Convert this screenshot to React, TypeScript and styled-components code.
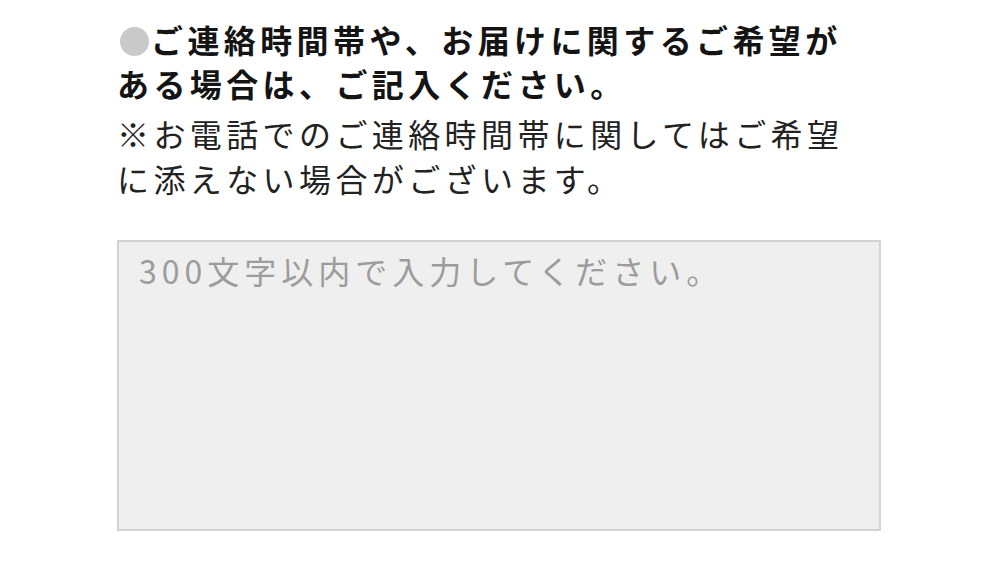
import React from 'react';
import styled, { createGlobalStyle } from 'styled-components';

const GlobalStyle = createGlobalStyle`
  html, body {
    margin: 0;
    padding: 0;
    background: #ffffff;
  }
  body {
    font-family: 'Noto Sans CJK JP', 'Noto Sans', sans-serif;
    color: #1a1a1a;
  }
`;

const FormWrap = styled.div`
  width: 764px;
  padding: 17px 0 0 117px;
  display: flex;
  flex-direction: column;
`;

const Heading = styled.div`
  font-size: 32px;
  font-weight: 700;
  line-height: 44px;
  letter-spacing: 4.4px;
  color: #141414;
`;

const Dot = styled.span`
  display: inline-block;
  width: 29px;
  height: 29px;
  border-radius: 50%;
  background: #c9c9c9;
  margin: 0 2px 0 3px;
  vertical-align: -3px;
`;

const Note = styled.div`
  margin-top: 6px;
  font-size: 32px;
  font-weight: 400;
  line-height: 45px;
  letter-spacing: 4.4px;
  color: #222222;
`;

const Request = styled.textarea`
  margin-top: 39px;
  width: 764px;
  height: 291px;
  box-sizing: border-box;
  border: 2px solid #d3d3d3;
  border-radius: 0;
  background: #efefef;
  padding: 6px 20px;
  font-family: 'Noto Sans CJK JP', 'Noto Sans', sans-serif;
  font-size: 32px;
  line-height: 44px;
  letter-spacing: 5px;
  color: #333333;
  resize: none;
  outline: none;

  &::placeholder {
    color: #9c9c9c;
  }
`;

const App = () => {
  return (
    <>
      <GlobalStyle />
      <FormWrap>
        <Heading>
          <Dot />
          ご連絡時間帯や、お届けに関するご希望が
          <br />
          ある場合は、ご記入ください。
        </Heading>
        <Note>
          ※お電話でのご連絡時間帯に関してはご希望
          <br />
          に添えない場合がございます。
        </Note>
        <Request placeholder="300文字以内で入力してください。" maxLength={300} />
      </FormWrap>
    </>
  );
};

export default App;
